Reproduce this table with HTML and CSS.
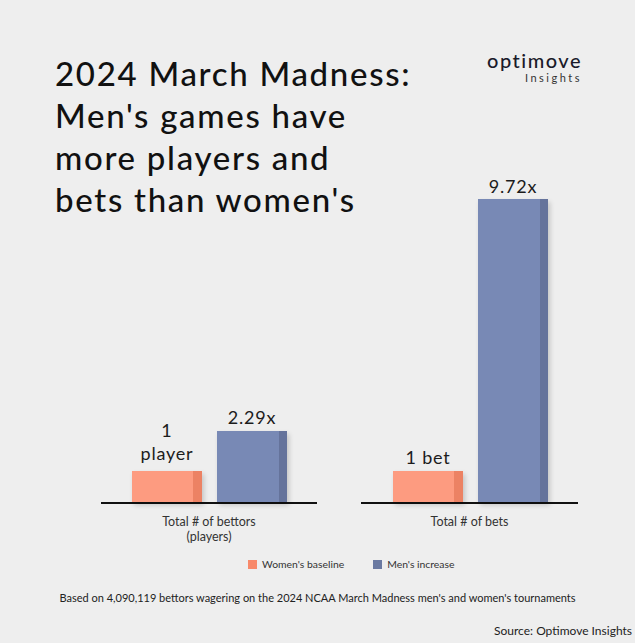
FILE: index.html
```html
<!DOCTYPE html>
<html lang="en">
<head>
<meta charset="utf-8">
<title>2024 March Madness</title>
<link rel="stylesheet" href="styles.css">
</head>
<body>
<div class="page">
  <section class="main">
    <div class="col-left">
      <h1 class="title">2024 March Madness:<br>Men's games have<br>more players and<br>bets than women's</h1>
      <div class="chart chart-left">
        <div class="plot">
          <div class="bar-col">
            <div class="val val-two">1<br>player</div>
            <div class="bar bar-w" style="height:31px"></div>
          </div>
          <div class="bar-col">
            <div class="val">2.29x</div>
            <div class="bar bar-m" style="height:71px"></div>
          </div>
        </div>
        <div class="cat">Total # of bettors<br>(players)</div>
      </div>
    </div>
    <div class="col-right">
      <div class="logo">
        <div class="logo-word">optimove</div>
        <div class="logo-sub">Insights</div>
      </div>
      <div class="chart chart-right">
        <div class="plot">
          <div class="bar-col">
            <div class="val">1 bet</div>
            <div class="bar bar-w" style="height:31px"></div>
          </div>
          <div class="bar-col">
            <div class="val val-tall">9.72x</div>
            <div class="bar bar-m" style="height:303px"></div>
          </div>
        </div>
        <div class="cat">Total # of bets</div>
      </div>
    </div>
  </section>
  <div class="legend">
    <span class="key"><span class="swatch swatch-w"></span>Women's baseline</span>
    <span class="key"><span class="swatch swatch-m"></span>Men's increase</span>
  </div>
  <p class="note">Based on 4,090,119 bettors wagering on the 2024 NCAA March Madness men's and women's tournaments</p>
  <p class="source">Source: Optimove Insights</p>
</div>
</body>
</html>
```
FILE: styles.css
```css
* { box-sizing: border-box; }
html, body {
  margin: 0;
  padding: 0;
  background: #eeeeee;
}
body {
  font-family: "Lato", "Liberation Sans", sans-serif;
  color: #222;
}
.page {
  width: 635px;
  height: 643px;
  overflow: hidden;
  background: #eeeeee;
}
.main {
  display: flex;
  height: 542px;
  padding: 52px 0 0 55px;
}
.col-left {
  width: 306px;
  display: flex;
  flex-direction: column;
}
.col-right {
  flex: 1;
  display: flex;
  flex-direction: column;
}
.title {
  margin: 0;
  font-size: 33px;
  line-height: 42px;
  font-weight: 500;
  letter-spacing: 1.7px;
  color: #111;
  white-space: nowrap;
  width: max-content;
}
.logo {
  align-self: flex-end;
  margin-right: 53px;
  text-align: right;
  color: #1a1a2a;
}
.logo-word {
  font-size: 20px;
  line-height: 16px;
  letter-spacing: 1.5px;
  font-weight: 500;
}
.logo-sub {
  margin-top: 4px;
  font-size: 11px;
  line-height: 12px;
  letter-spacing: 2.5px;
  color: #333;
}
.chart {
  margin-top: auto;
  width: 216px;
}
.chart-left { margin-left: 46px; }
.chart-right { width: 217px; }
.plot {
  display: flex;
  align-items: flex-end;
  gap: 15px;
  padding-left: 31px;
  border-bottom: 2px solid #111;
}
.chart-right .plot { padding-left: 32px; }
.bar-col {
  width: 70px;
  display: flex;
  flex-direction: column;
  align-items: center;
}
.val {
  font-size: 18px;
  line-height: 20px;
  letter-spacing: 0.8px;
  margin-bottom: 4px;
  text-align: center;
  color: #1c1c1c;
  white-space: nowrap;
}
.val-two {
  line-height: 23px;
  margin-bottom: 6px;
}
.val-tall { margin-bottom: 3px; }
.bar {
  width: 70px;
  box-shadow: 2px 3px 5px rgba(0, 0, 0, 0.18);
}
.bar-w {
  background: linear-gradient(to right, #fd9b80 0, #fd9b80 87%, #ec8264 87%, #ec8264 100%);
}
.bar-m {
  background: linear-gradient(to right, #7889b5 0, #7889b5 88%, #65739b 88%, #65739b 100%);
}
.cat {
  padding-top: 10px;
  height: 38px;
  font-size: 12.5px;
  line-height: 15px;
  text-align: center;
  color: #333;
}
.legend {
  display: flex;
  gap: 29px;
  margin-top: 15px;
  padding-left: 248px;
  font-size: 10.4px;
  line-height: 14px;
  color: #333;
}
.key {
  display: flex;
  align-items: center;
  gap: 5px;
}
.swatch {
  width: 9px;
  height: 9px;
}
.swatch-w { background: #f8896a; }
.swatch-m { background: #6a79a1; }
.note {
  margin: 20px 0 0;
  text-align: center;
  font-size: 11px;
  line-height: 14px;
  color: #222;
}
.source {
  margin: 19px 0 0;
  padding-right: 3px;
  text-align: right;
  font-size: 12px;
  line-height: 14px;
  color: #222;
}
```
